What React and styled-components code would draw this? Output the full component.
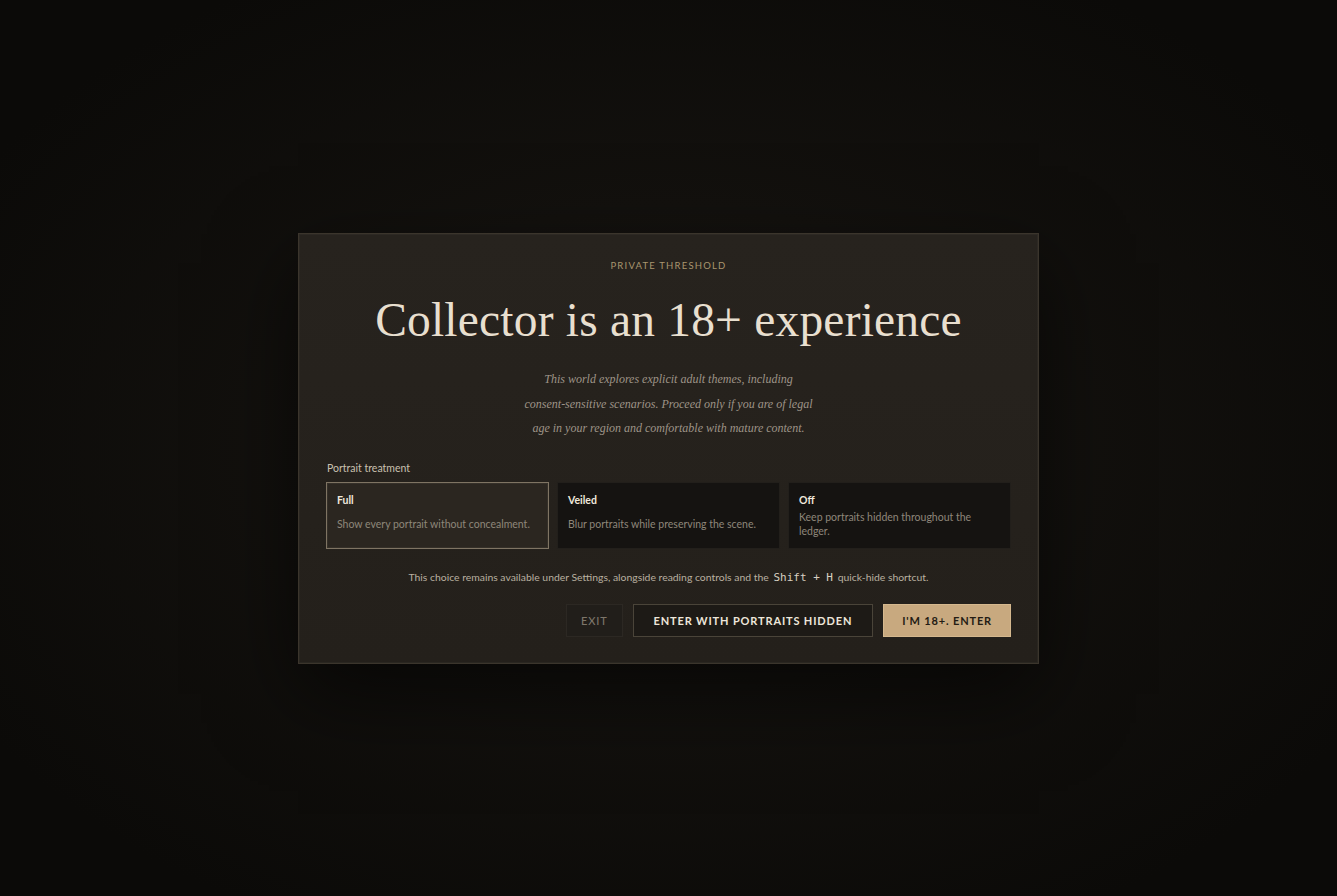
import React, { useState } from "react";
import styled, { createGlobalStyle } from "styled-components";

const GlobalStyle = createGlobalStyle`
  html, body {
    margin: 0;
    padding: 0;
    height: 100%;
  }
  body {
    background: #0b0a08;
    font-family: Lato, "Open Sans", sans-serif;
  }
`;

const Backdrop = styled.div`
  min-height: 896px;
  display: flex;
  align-items: center;
  justify-content: center;
  background: radial-gradient(
    ellipse 60% 60% at 50% 50%,
    #1a1612 0%,
    #13110e 45%,
    #0b0a08 100%
  );
`;

const Dialog = styled.section`
  width: 741px;
  box-sizing: border-box;
  margin-top: 1px;
  padding: 25px 27px 26px;
  background: linear-gradient(180deg, #27231e 0%, #24201b 100%);
  border: 1px solid #3b352c;
  box-shadow: inset 0 0 0 1px rgba(255, 240, 210, 0.03),
    0 30px 80px rgba(0, 0, 0, 0.6);
  display: flex;
  flex-direction: column;
`;

const Eyebrow = styled.div`
  text-align: center;
  font-size: 9.5px;
  letter-spacing: 1.2px;
  color: #a9966f;
  line-height: 14px;
`;

const Title = styled.h1`
  margin: 19px 0 0;
  text-align: center;
  font-family: "Liberation Serif", serif;
  font-weight: 400;
  font-size: 47.5px;
  line-height: 56px;
  color: #e8dfcf;
  letter-spacing: 0.2px;
`;

const Lead = styled.p`
  margin: 19px auto 0;
  text-align: center;
  font-family: "Liberation Serif", serif;
  font-style: italic;
  font-size: 12px;
  line-height: 24.5px;
  color: #9e9488;
`;

const Label = styled.div`
  margin-top: 20px;
  font-size: 10.5px;
  color: #c9c0b0;
  line-height: 14px;
  padding-left: 1px;
`;

const Options = styled.div`
  margin-top: 7px;
  display: grid;
  grid-template-columns: repeat(3, 1fr);
  gap: 8px;
`;

const Option = styled.button`
  all: unset;
  box-sizing: border-box;
  height: 67px;
  padding: 10px 10px;
  cursor: pointer;
  background: ${(p) => (p.$active ? "#2b2620" : "#151311")};
  border: 1px solid ${(p) => (p.$active ? "#7f7463" : "#221f1b")};
  box-shadow: ${(p) =>
    p.$active ? "inset 0 0 0 1px rgba(255,240,210,0.05)" : "none"};
  display: flex;
  flex-direction: column;
`;

const OptionName = styled.span`
  font-size: 10.5px;
  font-weight: 700;
  color: #efe8dc;
  line-height: 14px;
`;

const OptionText = styled.span`
  margin-top: ${(p) => (p.$tight ? 3 : 10)}px;
  font-size: 10.5px;
  line-height: 14px;
  color: #8e867a;
`;

const Note = styled.p`
  margin: 21px 0 0;
  text-align: center;
  font-size: 10.4px;
  color: #b9b0a0;
  line-height: 14px;
`;

const Kbd = styled.code`
  font-family: "DejaVu Sans Mono", monospace;
  font-size: 11px;
  color: #d8d0c2;
  margin: 0 2px;
`;

const Actions = styled.div`
  margin-top: 19px;
  display: flex;
  justify-content: flex-end;
  gap: 10px;
`;

const Button = styled.button`
  all: unset;
  box-sizing: border-box;
  height: 33px;
  padding: 0 ${(p) => p.$pad || 20}px;
  display: inline-flex;
  align-items: center;
  justify-content: center;
  font-family: Lato, sans-serif;
  font-weight: 700;
  font-size: 11px;
  letter-spacing: 0.85px;
  cursor: pointer;
  ${(p) =>
    p.$variant === "ghost" &&
    `
    background: #211e1a;
    border: 1px solid #2c2823;
    color: #7d766a;
    font-weight: 500;
  `}
  ${(p) =>
    p.$variant === "outline" &&
    `
    background: #1d1a16;
    border: 1px solid #4a4439;
    color: #ede6da;
  `}
  ${(p) =>
    p.$variant === "primary" &&
    `
    background: #c8a97f;
    border: 1px solid #d5b88e;
    color: #241c14;
  `}
`;

const options = [
  { id: "full", name: "Full", text: "Show every portrait without concealment." },
  { id: "veiled", name: "Veiled", text: "Blur portraits while preserving the scene." },
  { id: "off", name: "Off", text: "Keep portraits hidden throughout the ledger.", tight: true },
];

export default function App() {
  const [mode, setMode] = useState("full");
  return (
    <>
      <GlobalStyle />
      <Backdrop>
        <Dialog>
          <Eyebrow>PRIVATE THRESHOLD</Eyebrow>
          <Title>Collector is an 18+ experience</Title>
          <Lead>
            This world explores explicit adult themes, including
            <br />
            consent-sensitive scenarios. Proceed only if you are of legal
            <br />
            age in your region and comfortable with mature content.
          </Lead>
          <Label>Portrait treatment</Label>
          <Options>
            {options.map((o) => (
              <Option key={o.id} $active={mode === o.id} onClick={() => setMode(o.id)}>
                <OptionName>{o.name}</OptionName>
                <OptionText $tight={o.tight}>{o.text}</OptionText>
              </Option>
            ))}
          </Options>
          <Note>
            This choice remains available under Settings, alongside reading controls and the{" "}
            <Kbd>Shift + H</Kbd> quick-hide shortcut.
          </Note>
          <Actions>
            <Button $variant="ghost" $pad={14}>EXIT</Button>
            <Button $variant="outline" $pad={20}>ENTER WITH PORTRAITS HIDDEN</Button>
            <Button $variant="primary" $pad={18}>I'M 18+. ENTER</Button>
          </Actions>
        </Dialog>
      </Backdrop>
    </>
  );
}
